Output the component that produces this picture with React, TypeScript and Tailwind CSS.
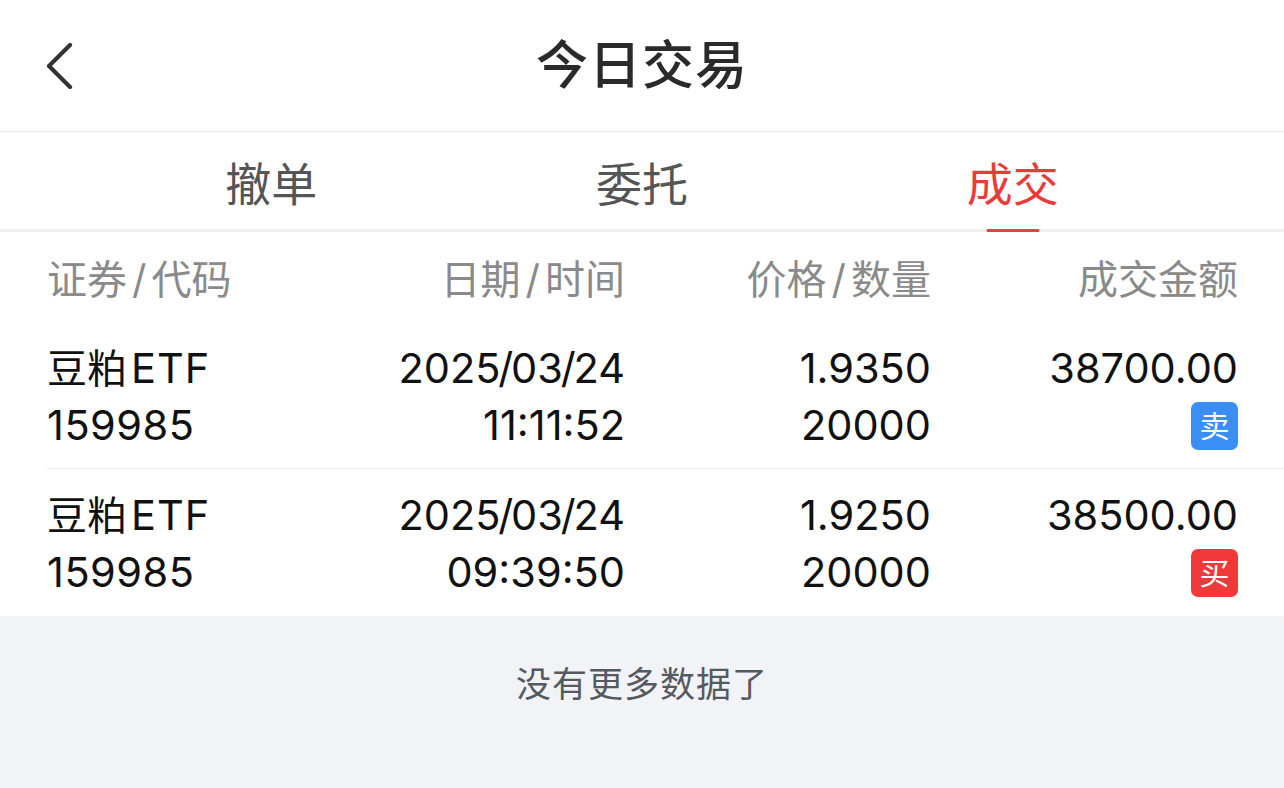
const trades = [
  { name: "豆粕", tag: "ETF", code: "159985", date: "2025/03/24", time: "11:11:52", price: "1.9350", qty: "20000", amount: "38700.00", side: "sell" },
  { name: "豆粕", tag: "ETF", code: "159985", date: "2025/03/24", time: "09:39:50", price: "1.9250", qty: "20000", amount: "38500.00", side: "buy" },
];

const tabs = ["撤单", "委托", "成交"];

function Head({ a, b }: { a: string; b: string }) {
  return (
    <span>
      {a}
      <span className="px-[5px]">/</span>
      {b}
    </span>
  );
}

// date with tighter slashes, as the reference font draws them
function DateText({ value }: { value: string }) {
  const parts = value.split("/");
  return (
    <span>
      {parts.map((p, i) => (
        <span key={i}>
          {i > 0 && <span className="mx-[-2.2px]">/</span>}
          {p}
        </span>
      ))}
    </span>
  );
}

export default function App() {
  return (
    <div className="min-h-[788px] w-full bg-[#f2f3f7] font-['Inter','Noto_Sans_CJK_SC',sans-serif]">
      {/* nav bar */}
      <header className="grid h-[132px] grid-cols-[1fr_auto_1fr] items-center border-b border-[#e8e8e8] bg-white">
        <div className="pl-[44px]">
          <svg width="30" height="46" viewBox="0 0 30 46" fill="none" aria-hidden>
            <path d="M26 2 L5 23 L26 44" stroke="#333" strokeWidth="4.2" strokeLinecap="round" strokeLinejoin="round" />
          </svg>
        </div>
        <h1 className="text-[52px] font-medium leading-none tracking-[1px] text-[#2a2a2a]">今日交易</h1>
        <div />
      </header>

      {/* tabs */}
      <nav className="grid h-[100px] grid-cols-3 border-b-[3px] border-[#eeeeee] bg-white px-[86px]">
        {tabs.map((tab, i) => {
          const active = i === 2;
          return (
            <div key={tab} className="relative flex items-center justify-center pt-[6px]">
              <span className={`text-[46px] leading-none ${active ? "text-[#e83b3b]" : "text-[#555]"}`}>{tab}</span>
              {active && <span className="absolute bottom-[-3px] left-1/2 h-[3px] w-[53px] -translate-x-1/2 rounded-sm bg-[#e0443e]" />}
            </div>
          );
        })}
      </nav>

      {/* list */}
      <section className="bg-white pl-[47px]">
        <div className="grid h-[90px] grid-cols-[1fr_306px_306px_307px] items-center pr-[46px] pt-[6px] text-[40px] leading-none text-[#8a8a8a]">
          <Head a="证券" b="代码" />
          <span className="text-right"><Head a="日期" b="时间" /></span>
          <span className="text-right"><Head a="价格" b="数量" /></span>
          <span className="text-right">成交金额</span>
        </div>
        {trades.map((t, idx) => (
          <div
            key={t.time}
            className={`grid h-[147px] grid-cols-[1fr_306px_306px_307px] pr-[46px] pt-[18px] text-[41.5px] leading-[57px] text-[#111] ${idx < trades.length - 1 ? "border-b border-[#eeeeee]" : ""}`}
          >
            <div className="flex flex-col">
              <span>
                <span className="text-[40px]">{t.name}</span>
                <span className="ml-[4px] tracking-[1px]">{t.tag}</span>
              </span>
              <span className="tracking-[0.5px]">{t.code}</span>
            </div>
            <div className="flex flex-col text-right">
              <DateText value={t.date} />
              <span>{t.time}</span>
            </div>
            <div className="flex flex-col text-right">
              <span>{t.price}</span>
              <span>{t.qty}</span>
            </div>
            <div className="flex flex-col items-end">
              <span>{t.amount}</span>
              <span className="flex h-[57px] items-center">
                <span
                  className={`flex h-[48px] w-[47px] items-center justify-center rounded-[7px] text-[30px] leading-none text-white ${t.side === "sell" ? "bg-[#3a8ef6]" : "bg-[#f0393a]"}`}
                >
                  {t.side === "sell" ? "卖" : "买"}
                </span>
              </span>
            </div>
          </div>
        ))}
      </section>

      <p className="pt-[47px] text-center text-[35px] leading-[42px] tracking-[1px] text-[#555a60]">没有更多数据了</p>
    </div>
  );
}
